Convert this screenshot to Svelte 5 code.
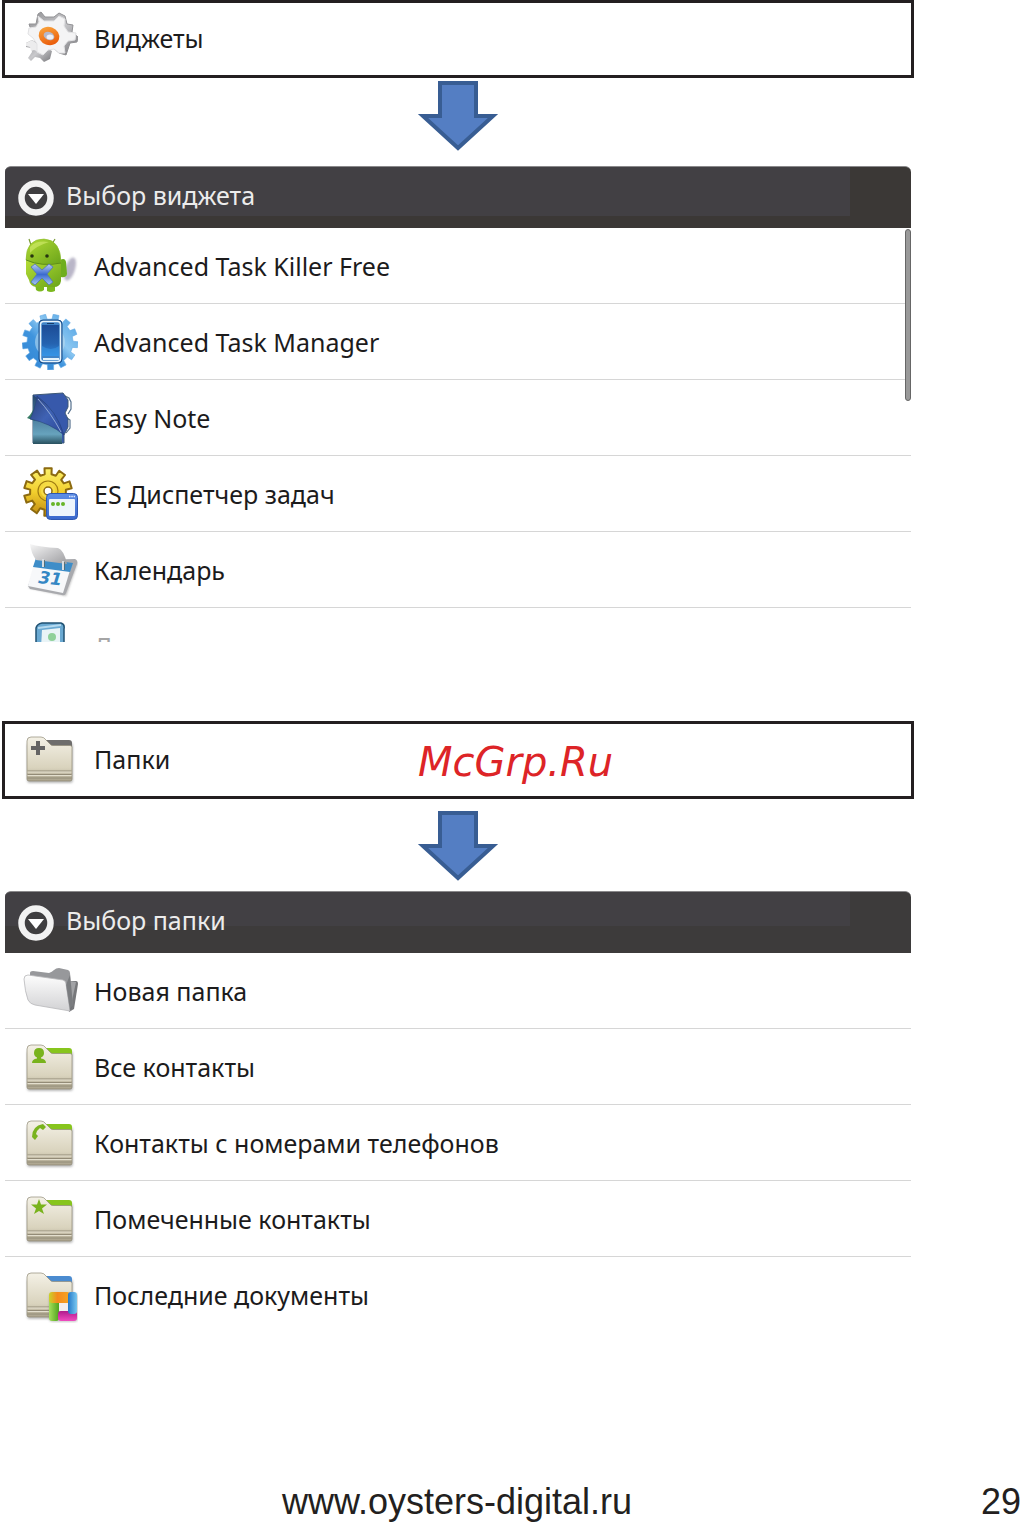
<script>
  const widgets = [
    { icon: 'killer', label: 'Advanced Task Killer Free' },
    { icon: 'manager', label: 'Advanced Task Manager' },
    { icon: 'note', label: 'Easy Note' },
    { icon: 'tasks', label: 'ES Диспетчер задач' },
    { icon: 'calendar', label: 'Календарь' },
    { icon: 'home', label: 'Д', cut: true }
  ];

  const folders = [
    { icon: 'open', label: 'Новая папка' },
    { icon: 'contacts', label: 'Все контакты' },
    { icon: 'phone', label: 'Контакты с номерами телефонов' },
    { icon: 'star', label: 'Помеченные контакты' },
    { icon: 'recent', label: 'Последние документы' }
  ];

  // outline of a cog wheel with flat teeth
  function gear(cx, cy, outer, inner, teeth, turn = 0, wide = 0.22) {
    const step = (Math.PI * 2) / teeth;
    const points = [];
    for (let i = 0; i < teeth; i++) {
      const a = i * step + turn;
      for (const [k, r] of [[-wide - 0.06, inner], [-wide, outer], [wide, outer], [wide + 0.06, inner]]) {
        points.push((cx + Math.cos(a + k * step) * r).toFixed(1) + ' ' + (cy + Math.sin(a + k * step) * r).toFixed(1));
      }
    }
    return 'M' + points.join('L') + 'Z';
  }
</script>

<svelte:head>
  <title>Oysters</title>
</svelte:head>

<svg class="defs" width="0" height="0" aria-hidden="true">
  <defs>
    <linearGradient id="paper" x1="0" y1="0" x2="0" y2="1">
      <stop offset="0" stop-color="#f4f1e6" /><stop offset="0.7" stop-color="#d9d3bd" /><stop offset="1" stop-color="#aaa28c" />
    </linearGradient>
    <linearGradient id="steel" x1="0" y1="0" x2="1" y2="1">
      <stop offset="0" stop-color="#8f8f92" /><stop offset="0.5" stop-color="#c9c9cc" /><stop offset="1" stop-color="#77777b" />
    </linearGradient>
    <linearGradient id="white" x1="0" y1="0" x2="0" y2="1">
      <stop offset="0" stop-color="#fdfdfd" /><stop offset="1" stop-color="#d2d2d4" />
    </linearGradient>
    <linearGradient id="orange" x1="0" y1="0" x2="1" y2="1">
      <stop offset="0" stop-color="#f9a13a" /><stop offset="1" stop-color="#e9590a" />
    </linearGradient>
    <linearGradient id="green" x1="0" y1="0" x2="1" y2="1">
      <stop offset="0" stop-color="#b4dc35" /><stop offset="1" stop-color="#6aa41a" />
    </linearGradient>
    <linearGradient id="sky" x1="1" y1="0" x2="0" y2="1">
      <stop offset="0" stop-color="#4a9de0" /><stop offset="0.4" stop-color="#8cc8f2" /><stop offset="0.6" stop-color="#3f94dd" /><stop offset="1" stop-color="#2f83d2" />
    </linearGradient>
    <linearGradient id="screen" x1="0" y1="0" x2="0" y2="1">
      <stop offset="0" stop-color="#1c4c96" /><stop offset="0.6" stop-color="#2563b0" /><stop offset="1" stop-color="#2e8be0" />
    </linearGradient>
    <linearGradient id="flap" x1="0" y1="0" x2="1" y2="1">
      <stop offset="0" stop-color="#2a3f76" /><stop offset="0.5" stop-color="#3f62b4" /><stop offset="1" stop-color="#2b4899" />
    </linearGradient>
    <linearGradient id="sheet" x1="0" y1="0" x2="0" y2="1">
      <stop offset="0" stop-color="#24466e" /><stop offset="0.8" stop-color="#67a3bd" /><stop offset="1" stop-color="#28505e" />
    </linearGradient>
    <linearGradient id="gold" x1="0" y1="0" x2="0" y2="1">
      <stop offset="0" stop-color="#fbf06a" /><stop offset="0.5" stop-color="#f2cf2d" /><stop offset="1" stop-color="#c08a10" />
    </linearGradient>
    <linearGradient id="win" x1="0" y1="0" x2="0" y2="1">
      <stop offset="0" stop-color="#5d8ee6" /><stop offset="1" stop-color="#3a68cc" />
    </linearGradient>
    <linearGradient id="cross" x1="0" y1="0" x2="0" y2="1">
      <stop offset="0" stop-color="#b9cdf3" /><stop offset="0.5" stop-color="#3b6bd0" /><stop offset="1" stop-color="#a9c9f5" />
    </linearGradient>
    <linearGradient id="curl" x1="0" y1="0" x2="1" y2="1">
      <stop offset="0" stop-color="#f7f7f7" /><stop offset="0.5" stop-color="#c9c9cb" /><stop offset="1" stop-color="#9d9da0" />
    </linearGradient>
    <linearGradient id="ring-top" x1="0" y1="0" x2="1" y2="0">
      <stop offset="0" stop-color="#c9d42a" /><stop offset="0.4" stop-color="#f58a1d" /><stop offset="1" stop-color="#f5a623" />
    </linearGradient>
    <linearGradient id="ring-right" x1="0" y1="0" x2="1" y2="0">
      <stop offset="0" stop-color="#2478c8" /><stop offset="1" stop-color="#79c8f0" />
    </linearGradient>
    <linearGradient id="ring-bottom" x1="0" y1="0" x2="0" y2="1">
      <stop offset="0" stop-color="#b01b8c" /><stop offset="1" stop-color="#f04cc0" />
    </linearGradient>
    <linearGradient id="ring-left" x1="0" y1="0" x2="1" y2="0">
      <stop offset="0" stop-color="#a5e05a" /><stop offset="1" stop-color="#4fa31e" />
    </linearGradient>
    <filter id="soft" x="-20%" y="-20%" width="140%" height="140%">
      <feGaussianBlur stdDeviation="1.2" />
    </filter>
  </defs>
</svg>

{#snippet folder(back)}
  <rect x="5" y="12" width="46" height="40" rx="3" fill="#777" opacity="0.5" filter="url(#soft)" />
  <path d="M22 9H47Q50 9 50 12V30H24Z" fill={back} />
  <path d="M5 10Q5 6 9 6H19Q22 6 24 9L28 13Q29 14.500 31 14.500H48Q50 14.500 50 16V48Q50 50 48 50H7Q5 50 5 48Z" fill="url(#paper)" stroke="#8f8977" stroke-width="0.7" />
  <path d="M5.500 40H49.500M5.500 43.500H49.500M5.500 47H49.500" stroke="#8d8672" stroke-width="0.9" />
  <path d="M5.500 41H49.500M5.500 44.500H49.500" stroke="#f4f0e2" stroke-width="0.7" />
{/snippet}

{#snippet icon(name)}
  <svg class="icon" viewBox="0 0 56 56" aria-hidden="true">
    {#if name === 'widgets'}
      <path d="M4 33L10 30L30 41L28 49L22 52L18 48L13 47L9 51L6 48L10 42L9 38L4 37Z" fill="url(#steel)" />
      <path d="M4 33L10 30L18 36L17 42L12 40L9 41L8 37L4 36Z" fill="#ececed" />
      <path d="M16 4L19 2L23 7H32L37 3L43 6L45 14L51 15L50 22L56 27L55 32L48 33L44 45L37 43L8 17L7 14L14 14Z" fill="url(#steel)" stroke="#929295" stroke-linejoin="round" />
      <path d="M16 6L22 11H32L37 6L43 9L42 16L46 22L54 23L53 30L46 31L42 36L43 43L37 43L32 39L26 40L21 45L15 42L15 34L11 28L6 24L7 18L14 17L17 12Z" fill="#f4f4f5" stroke="#e2e2e4" stroke-linejoin="round" />
      <ellipse cx="27" cy="26" rx="8" ry="6.500" fill="#b5b8ca" stroke="url(#orange)" stroke-width="5" transform="rotate(20 27 26)" />
      <ellipse cx="28" cy="27" rx="3.500" ry="2.500" fill="#eef0f6" />
    {:else if name === 'killer'}
      <ellipse cx="48" cy="31" rx="5" ry="12" fill="#8c86a4" opacity="0.6" transform="rotate(18 48 31)" filter="url(#soft)" />
      <path d="M38 22Q43 19 44 24L45 36Q44 40 39 39Z" fill="#6fae1e" />
      <path d="M9 7L7 1M30 6L33 1" stroke="#7a9a35" stroke-width="1.200" />
      <path d="M13 45H22V52Q18 55 14 52ZM25 45H33V53Q29 55 25 53Z" fill="#7cb81f" />
      <path d="M4 23L39 25V43Q38 49 32 49H14Q8 48 7 42L4 36Z" fill="url(#green)" />
      <path d="M4 22Q4 1 22 1Q39 2 39 25Q20 29 4 22Z" fill="url(#green)" stroke="#8cbb2d" stroke-width="0.600" />
      <path d="M4 22Q20 29 39 25" fill="none" stroke="#5f8f17" />
      <path d="M8 9Q14 2 27 4Q14 8 8 15Z" fill="#d3ec70" opacity="0.6" />
      <circle cx="10" cy="18" r="1.800" fill="#27350f" /><circle cx="25" cy="18" r="1.800" fill="#27350f" />
      <path d="M9 29L13 26L20 32L27 26L31 29L25 36L31 44L27 47L20 40L13 47L9 44L15 36Z" fill="url(#cross)" stroke="#5274b5" stroke-width="0.800" />
    {:else if name === 'manager'}
      <path d={gear(28, 28, 28, 23, 13, 0.1)} fill="url(#sky)" stroke="#63aae4" stroke-width="0.600" />
      <circle cx="28" cy="28" r="15" fill="#b8d9ee" opacity="0.600" />
      <rect x="17" y="6" width="23" height="43" rx="4" fill="#2867ad" stroke="#174b86" />
      <rect x="18.500" y="7.500" width="20" height="40" rx="3" fill="#3f84c8" stroke="#e8f4fc" stroke-width="1.500" />
      <rect x="20" y="11" width="17" height="31" fill="url(#screen)" />
      <path d="M20 32Q29 38 37 32V42H20Z" fill="#3c9bea" opacity="0.500" />
      <path d="M25 9.500H32" stroke="#173a68" /><path d="M21 45H37" stroke="#e3f2fb" stroke-width="2" />
    {:else if name === 'note'}
      <path d="M41 5L47 8L49 12V19L46 24M45 28L48 30V38L44 43" fill="none" stroke="#55718e" stroke-width="1.200" />
      <path d="M11 5L41 3L46 10V17L43 23L46 29V37L42 45V53H11Z" fill="#3759ab" stroke="#3d5876" />
      <path d="M11 5V54H40V43L15 8Z" fill="url(#sheet)" />
      <path d="M14 10Q12 22 5 28L13 31Z" fill="#397d66" />
      <path d="M15 6Q12 22 8 29Q28 33 42 45Q35 21 15 6Z" fill="url(#flap)" stroke="#233f77" stroke-width="0.600" />
      <path d="M16 9Q29 23 39 42" fill="none" stroke="#a7bfe2" stroke-width="0.800" />
    {:else if name === 'tasks'}
      <path d={gear(26, 26, 24, 18, 10, 0.32, 0.24)} fill="url(#gold)" stroke="#8c6a10" stroke-width="2" stroke-linejoin="round" />
      <circle cx="26" cy="25" r="10" fill="none" stroke="#a07d12" stroke-width="1.200" />
      <circle cx="26" cy="25" r="7" fill="#f7dc46" />
      <circle cx="26" cy="25" r="4" fill="#fff" stroke="#8c6a10" stroke-width="1.500" />
      <rect x="24.500" y="27.500" width="31" height="26" rx="4" fill="url(#win)" stroke="#2e57b0" />
      <rect x="27" y="33" width="26" height="17" rx="1" fill="#eef5fc" />
      <path d="M47 30.500H53" stroke="#dce8ff" stroke-width="1.500" stroke-dasharray="1.5 0.8" />
      <circle cx="31" cy="38" r="2" fill="#67b529" /><circle cx="36" cy="38" r="2" fill="#67b529" /><circle cx="41" cy="38" r="2" fill="#67b529" />
    {:else if name === 'calendar'}
      <path d="M15 20L56 20L44 54L7 46Z" fill="#777" opacity="0.500" filter="url(#soft)" />
      <path d="M16 18L53 17Q56 18 55 22L44 51Q43 54 40 53L8 47L6 44Z" fill="#a9aaae" />
      <path d="M13 18L50 22L41 51L6 44Z" fill="#f7f8fa" />
      <path d="M14 16L51 21L48 30L11 25Z" fill="#3e8dc8" />
      <path d="M8 2Q18 5 36 6Q42 8 45 22L14 18Q9 11 8 2Z" fill="url(#curl)" />
      <path d="M21 17V25M41 19V28" stroke="#d9dde2" stroke-width="2" /><path d="M22.500 18V25M42.500 20V28" stroke="#566" stroke-width="0.800" />
      <text x="16" y="41" class="day" transform="rotate(6 16 41)">31</text>
    {:else if name === 'home'}
      <path d="M14 30V10Q15 6 20 5L39 5Q43 6 42 11V30Z" fill="#6aa9d2" stroke="#215273" stroke-width="1.500" />
      <path d="M19 30L20 12L38 10V30Z" fill="#e9f4f7" />
      <path d="M16 10L39 7" stroke="#b5daf0" stroke-width="2" />
      <circle cx="30" cy="19" r="4" fill="#8fd19a" />
    {:else if name === 'open'}
      <path d="M44 18H54Q56 18 56 21L52 46L47 49Z" fill="#77787b" />
      <path d="M48 18L54 19L49 42Z" fill="#a2a3a6" />
      <path d="M8 14V10Q8 8 11 8L27 10Q30 9 32 7Q34 5 37 5L46 7Q48 8 48 10L51 42L47 47Z" fill="#97989b" />
      <path d="M2 16Q2 12 6 12L41 17Q44 18 44 21L48 48L13 42Q8 41 6 37Q3 29 2 16Z" fill="url(#white)" stroke="#b7b7ba" stroke-width="0.800" />
      <path d="M44 22L48 48L51 42L48 12Z" fill="#68696c" opacity="0.600" />
    {:else if name === 'add'}
      {@render folder('#6e6d6c')}
      <path d="M14 10H18V15H23V19H18V24H14V19H9V15H14Z" fill="#656464" />
    {:else if name === 'contacts'}
      {@render folder('#87c51d')}
      <path d="M17 9Q22 9 22 14Q22 17 19 18.500V19.500Q24 20 24 24H10Q10 20 15 19.500V18.500Q12 17 12 14Q12 9 17 9Z" fill="#79b31d" />
    {:else if name === 'phone'}
      {@render folder('#87c51d')}
      <path d="M10 22Q10 11 21 9L24 12L21 15L18 13Q15 15 14 19L16 21L13 25Z" fill="#79b31d" />
    {:else if name === 'star'}
      {@render folder('#87c51d')}
      <path d="M17 8L19 13.500H25L20 17.500L22 23L17 20L12 23L14 17.500L9 13.500H15Z" fill="#79b31d" />
    {:else if name === 'recent'}
      {@render folder('#4a8bd0')}
      <rect x="27" y="26" width="29" height="29" rx="4" fill="#777" opacity="0.400" filter="url(#soft)" />
      <rect x="27" y="27" width="10" height="27" rx="3" fill="url(#ring-left)" />
      <rect x="27" y="25" width="21" height="11" rx="3" fill="url(#ring-top)" />
      <rect x="36" y="44" width="19" height="10" rx="3" fill="url(#ring-bottom)" />
      <rect x="46" y="25" width="9" height="22" rx="3" fill="url(#ring-right)" />
      <rect x="37" y="36" width="9" height="8" fill="#f3eeee" />
    {/if}
  </svg>
{/snippet}

{#snippet arrow()}
  <svg class="arrow" viewBox="0 0 84 70" aria-hidden="true">
    <path d="M24 2H60V35H77L42 67L7 35H24Z" fill="#547ec3" stroke="#385d93" stroke-width="4" />
  </svg>
{/snippet}

{#snippet panel(title, items, kind)}
  <section class="panel {kind}">
    <h2 class="panel-title">
      <svg class="circle" viewBox="0 0 36 36" aria-hidden="true">
        <circle cx="18" cy="18" r="14.500" fill="#3f3e40" stroke="#f2f2f2" stroke-width="6.500" />
        <path d="M10 14H26L18 24Z" fill="#fff" />
      </svg>
      <span>{title}</span>
    </h2>
    <ul>
      {#each items as item}
        <li class:cut={item.cut}>
          <button class="row">{@render icon(item.icon)}<span>{item.label}</span></button>
        </li>
      {/each}
    </ul>
  </section>
{/snippet}

<main>
  <div class="content">
    <button class="row choice">{@render icon('widgets')}<span>Виджеты</span></button>
    {@render arrow()}
    {@render panel('Выбор виджета', widgets, 'scrollable')}

    <div class="marked">
      <button class="row choice">{@render icon('add')}<span>Папки</span></button>
      <span class="mark">McGrp.Ru</span>
    </div>
    {@render arrow()}
    {@render panel('Выбор папки', folders, 'plain')}
  </div>

  <footer>
    <a href="http://www.oysters-digital.ru">www.oysters-digital.ru</a>
    <span>29</span>
  </footer>
</main>

<style>
  :global(body) {
    background: #fff;
  }
  main {
    font-family: "Noto Sans", "Open Sans", sans-serif;
    font-size: 25px;
    line-height: 32px;
    color: #1c1b1c;
    overflow: hidden;
  }
  .defs {
    position: absolute;
  }
  .content {
    margin: 0 107px 0 2px;
  }
  .row {
    display: flex;
    align-items: center;
    gap: 16px;
    box-sizing: border-box;
    width: 100%;
    height: 75px;
    padding: 0 17px;
    border: 0;
    background: none;
    color: inherit;
    font: inherit;
    text-align: left;
    cursor: pointer;
  }
  .row.choice {
    height: 78px;
    padding-bottom: 2px;
    border: 3px solid #231f20;
    background: #fff;
  }
  .icon {
    flex: none;
    width: 56px;
    height: 56px;
  }
  .day {
    font: italic bold 17px "DejaVu Sans", sans-serif;
    fill: #3487c4;
  }
  .arrow {
    display: block;
    width: 84px;
    height: 70px;
    margin: 3px auto 15px;
  }
  .marked + .arrow {
    margin: 12px auto 10px;
  }
  .panel {
    position: relative;
    margin: 0 3px;
  }
  .panel-title {
    display: flex;
    align-items: center;
    gap: 12px;
    height: 62px;
    box-sizing: border-box;
    margin: 0;
    padding: 0 13px;
    border-top: 1px solid #8a898b;
    border-radius: 6px 6px 0 0;
    background: linear-gradient(#424044, #424044) 0 0 / calc(100% - 61px) 49px no-repeat, #3b3836;
    color: #ececec;
    font-size: 25px;
    font-weight: normal;
  }
  .panel-title span {
    padding-bottom: 6px;
  }
  .plain .panel-title {
    background: linear-gradient(#424044, #424044) 0 0 / calc(100% - 61px) 34px no-repeat, #3d3b3b;
  }
  .circle {
    flex: none;
    width: 36px;
    height: 36px;
  }
  ul {
    margin: 0;
    padding: 0;
    list-style: none;
  }
  li {
    border-bottom: 1px solid #d6d6d6;
  }
  li:last-child {
    border-bottom: 0;
  }
  .cut {
    height: 34px;
    overflow: hidden;
    color: #a5a5a5;
  }
  .scrollable::after {
    content: "";
    position: absolute;
    top: 63px;
    right: 0;
    box-sizing: border-box;
    width: 6px;
    height: 172px;
    border: 1px solid #666;
    border-radius: 3px;
    background: #999;
  }
  .marked {
    position: relative;
    margin-top: 79px;
  }
  .mark {
    position: absolute;
    top: 18px;
    left: 50%;
    margin-left: -40px;
    color: #dd2427;
    font: italic 40px/46px "DejaVu Sans", sans-serif;
    pointer-events: none;
  }
  footer {
    display: grid;
    grid-template-columns: 1fr auto;
    margin-top: 150px;
    font: 36px/40px "Liberation Sans", Arial, sans-serif;
    color: #231f20;
  }
  footer a {
    margin-right: 67px;
    color: inherit;
    text-align: center;
    text-decoration: none;
  }
</style>
